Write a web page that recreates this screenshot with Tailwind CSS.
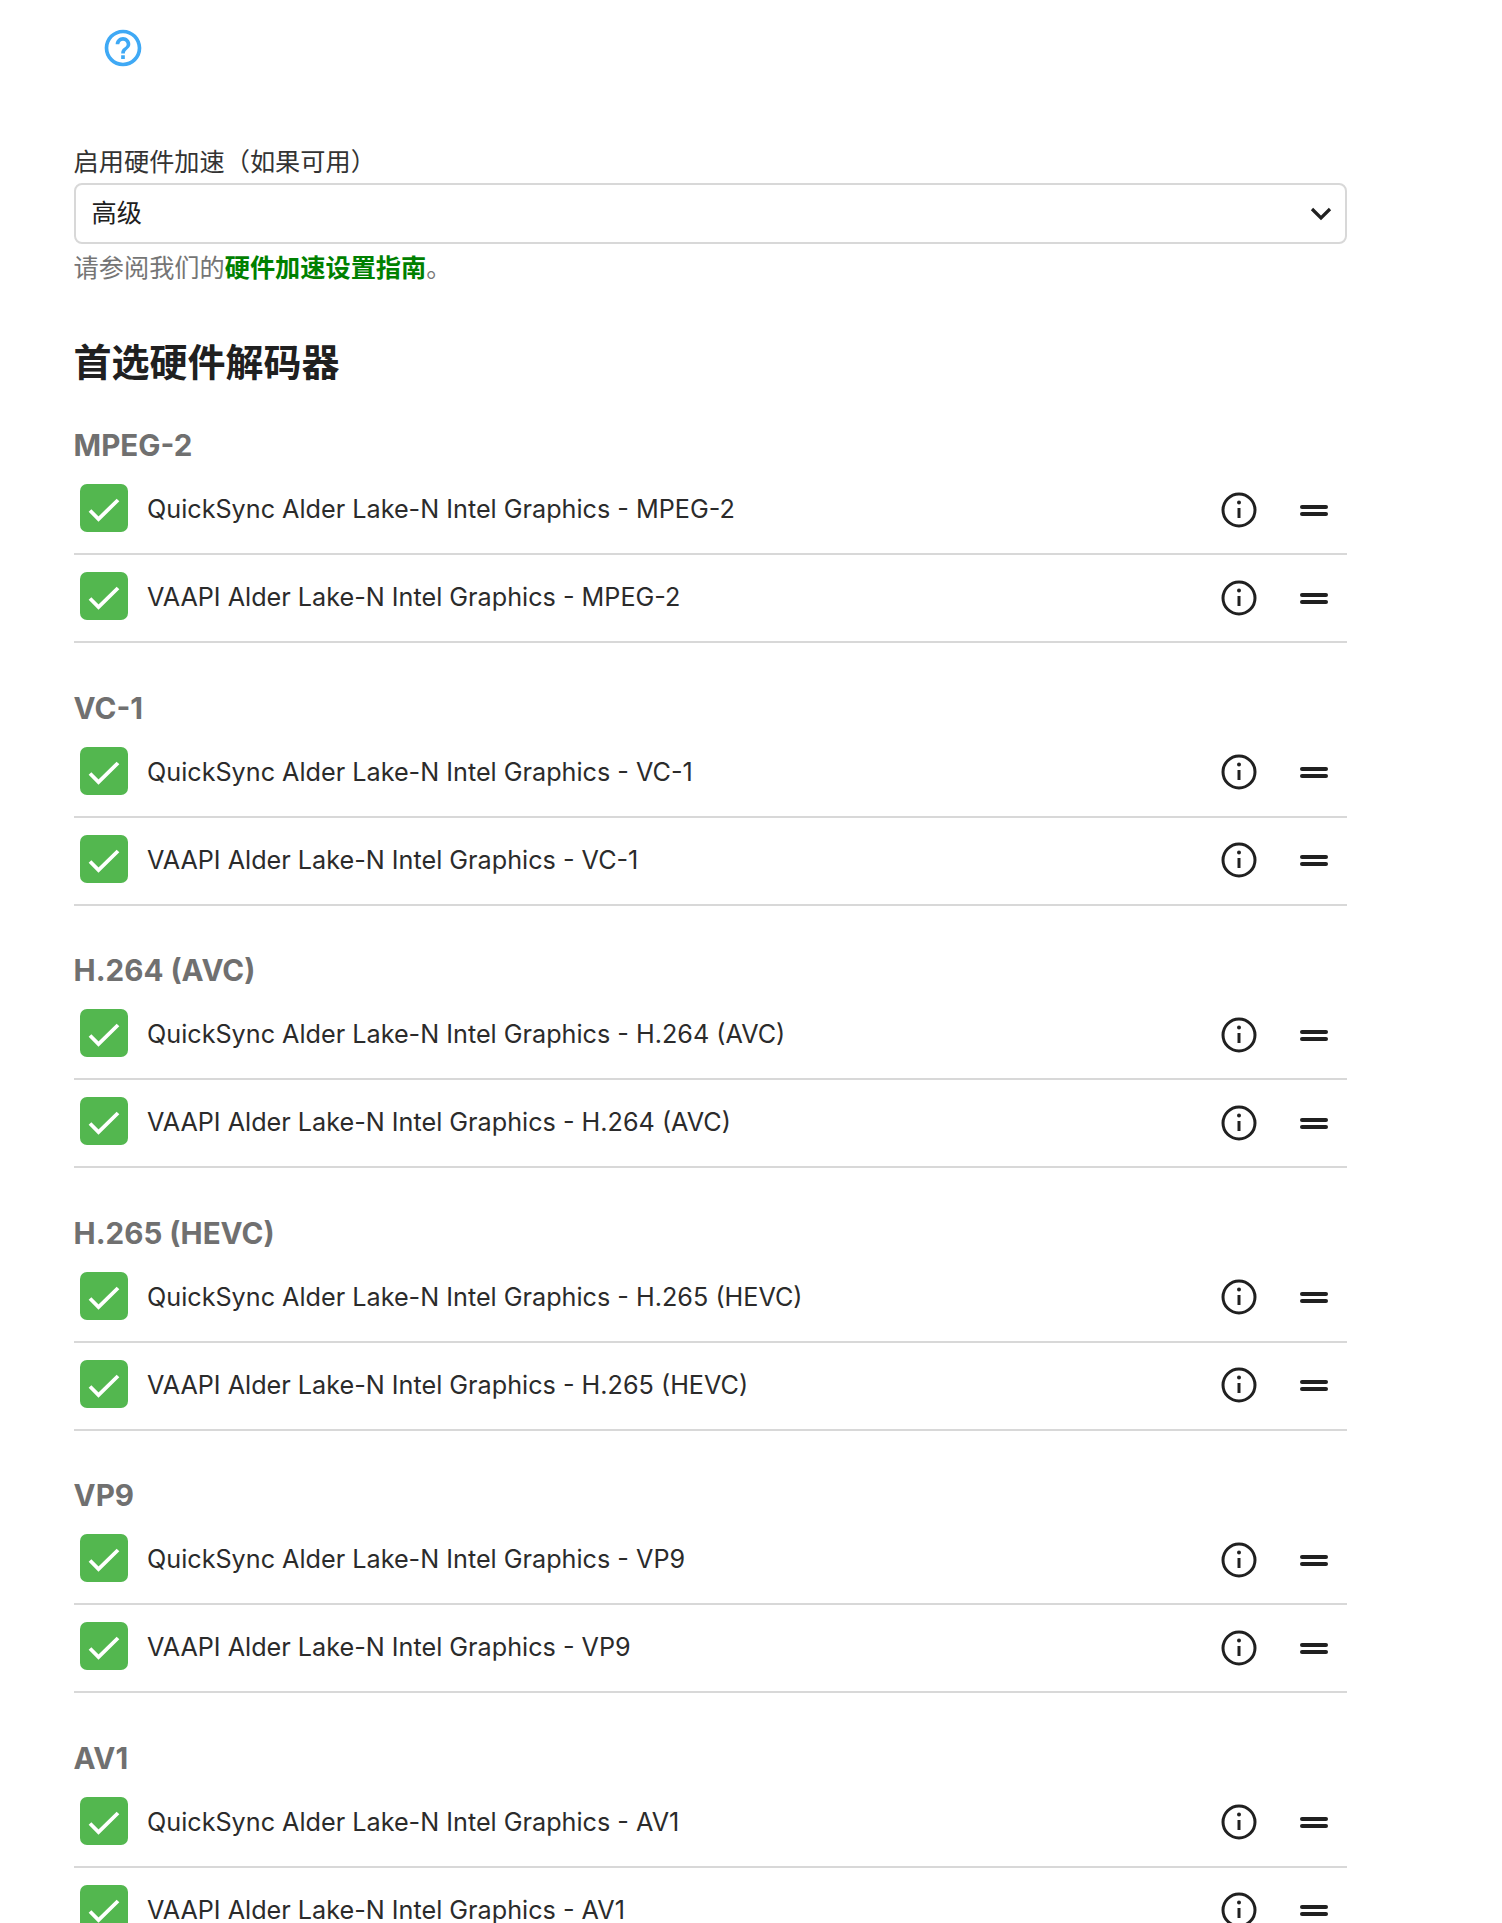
<!DOCTYPE html>
<html lang="zh-CN">
<head>
  <meta charset="UTF-8" />
  <title>转码</title>
  <script src="https://cdn.jsdelivr.net/npm/@tailwindcss/browser@4"></script>
</head>
<body class="bg-white text-[#202020] font-['Inter','Noto_Sans_CJK_SC',sans-serif] h-[1923px] overflow-hidden">
  <main class="w-[1273px] ml-[73.6px]">
    <!-- help button -->
    <div class="h-[145px] pt-[26px] pl-[27px]">
      <svg class="w-[44px] h-[44px] text-[#3fa9f5]" viewBox="0 0 24 24" fill="currentColor">
        <path d="M11 18h2v-2h-2v2zm1-16C6.48 2 2 6.48 2 12s4.48 10 10 10 10-4.48 10-10S17.52 2 12 2zm0 18c-4.41 0-8-3.59-8-8s3.59-8 8-8 8 3.59 8 8-3.59 8-8 8zm0-14c-2.21 0-4 1.79-4 4h2c0-1.1.9-2 2-2s2 .9 2 2c0 2-3 1.75-3 5h2c0-2.25 3-2.5 3-5 0-2.21-1.79-4-4-4z"/>
      </svg>
    </div>

    <label class="block text-[25.2px] leading-[34px] mb-[4px] text-[#333]">启用硬件加速（如果可用）</label>
    <div class="h-[61px] border-2 border-[#d8d8d8] rounded-lg flex items-center justify-between pl-[16px] pr-[12px] text-[25.2px]">
      <span>高级</span>
      <svg class="w-[24px] h-[24px]" viewBox="0 0 24 24" fill="none" stroke="currentColor" stroke-width="3.2"><path d="M3 7l9 9 9-9"/></svg>
    </div>
    <p class="mt-[7px] text-[25.2px] leading-[34px] text-[#757575]">请参阅我们的<a href="#" class="font-bold text-[#008000]">硬件加速设置指南</a>。</p>

    <h2 class="mt-[52px] mb-[37px] text-[38px] leading-[50px] font-bold">首选硬件解码器</h2>

    <div id="sections"></div>
  </main>

<script>
  const codecs = ['MPEG-2', 'VC-1', 'H.264 (AVC)', 'H.265 (HEVC)', 'VP9', 'AV1'];

  function row(name) {
    return `
      <div class="h-[88px] border-b-2 border-[#d8d8d8] flex items-start">
        <span class="mt-[17px] ml-[6.4px] w-[48px] h-[48px] rounded-[7px] bg-[#53b74f] shrink-0">
          <svg class="w-[48px] h-[48px]" viewBox="0 0 48 48" fill="none" stroke="white" stroke-width="3.8"><path d="M10 26.5l8.5 8.5L38 16"/></svg>
        </span>
        <span class="ml-[19px] mt-[25px] text-[25.2px] leading-[34px] text-[#2b2b2b] flex-1">${name}</span>
        <svg class="mt-[23.5px] w-[38px] h-[38px] mr-[42px]" viewBox="0 0 38 38" fill="none" stroke="#202020" stroke-width="3">
          <circle cx="19" cy="19" r="16"/>
          <path d="M19 17v10"/>
          <circle cx="19" cy="11.5" r="2" fill="#202020" stroke="none"/>
        </svg>
        <span class="mt-[37.5px] mr-[19px] w-[28px] h-[11px] flex flex-col justify-between">
          <i class="block h-[4px] rounded-full bg-[#202020]"></i>
          <i class="block h-[4px] rounded-full bg-[#202020]"></i>
        </span>
      </div>`;
  }

  document.getElementById('sections').innerHTML = codecs.map(c => `
    <section class="mb-[43.6px]">
      <h3 class="text-[29.6px] leading-[43px] font-bold text-[#707070]">${c}</h3>
      ${row('QuickSync Alder Lake-N Intel Graphics - ' + c)}
      ${row('VAAPI Alder Lake-N Intel Graphics - ' + c)}
    </section>`).join('');
</script>
</body>
</html>
